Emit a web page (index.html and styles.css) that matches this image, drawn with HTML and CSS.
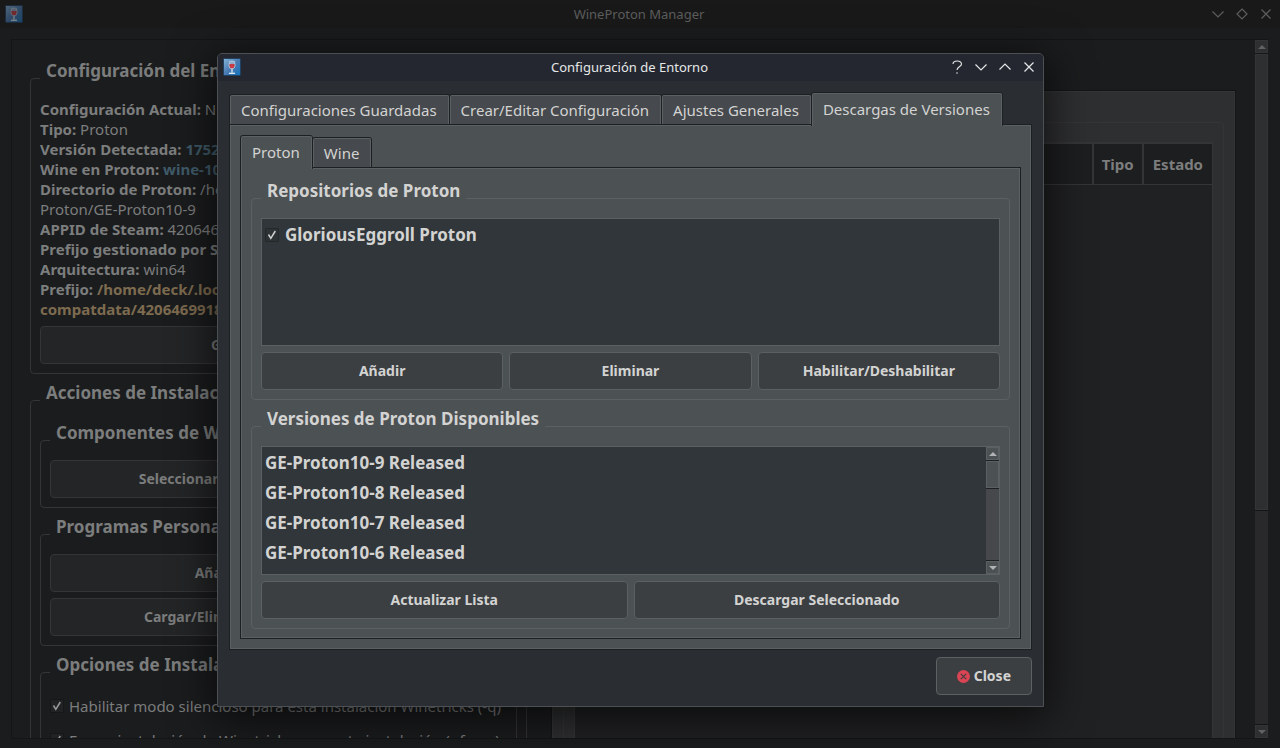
FILE: index.html
```html
<!DOCTYPE html>
<html lang="es">
<head>
<meta charset="utf-8">
<title>WineProton Manager</title>
<link rel="stylesheet" href="styles.css">
</head>
<body>
<svg class="defs" width="0" height="0" aria-hidden="true">
  <defs>
    <linearGradient id="sky" x1="0" y1="0" x2="1" y2="1">
      <stop offset="0" stop-color="#86b6da"/>
      <stop offset="0.5" stop-color="#4a7ab2"/>
      <stop offset="1" stop-color="#1173bd"/>
    </linearGradient>
    <symbol id="app" viewBox="0 0 18 18">
      <rect x="0.5" y="0.5" width="17" height="17" rx="1" fill="url(#sky)" stroke="#22405f"/>
      <path d="M6.5 3.500Q9 2.500 11.500 3.500L12 7.500a3 3.200 0 0 1-6 0z" fill="#8fa9c8" stroke="#c3d2e2" stroke-width="0.8"/>
      <path d="M6.500 6h5v2a2.500 2.400 0 0 1-5 0z" fill="#c93a44"/>
      <path d="M9 10.800v4" stroke="#d5e0ea" stroke-width="1.400" fill="none"/>
      <path d="M6 15.300h6" stroke="#eef3f7" stroke-width="1.200" fill="none"/>
    </symbol>
    <symbol id="help" viewBox="0 0 14 14"><path d="M3 4C3 .2 11.500-.2 11.500 4c0 2.800-4.500 2.800-4.500 6M7 12.200v1.500" fill="none" stroke="currentColor" stroke-width="1.100"/></symbol>
    <symbol id="down" viewBox="0 0 14 14"><path d="M1.500 4.500 7 10l5.500-5.500" fill="none" stroke="currentColor" stroke-width="1.200"/></symbol>
    <symbol id="up" viewBox="0 0 14 14"><path d="M1.500 9.500 7 4l5.500 5.500" fill="none" stroke="currentColor" stroke-width="1.200"/></symbol>
    <symbol id="diamond" viewBox="0 0 14 14"><path d="M7 2l5 5-5 5-5-5z" fill="none" stroke="currentColor" stroke-width="1.200"/></symbol>
    <symbol id="x" viewBox="0 0 14 14"><path d="M2.500 2.500l9 9M11.500 2.500l-9 9" fill="none" stroke="currentColor" stroke-width="1.200"/></symbol>
    <symbol id="tri-up" viewBox="0 0 8 4"><path d="M0 4l4-4 4 4z" fill="currentColor"/></symbol>
    <symbol id="tri-down" viewBox="0 0 8 4"><path d="M0 0l4 4 4-4z" fill="currentColor"/></symbol>
  </defs>
</svg>

<div class="window">
  <header class="titlebar">
    <svg class="app-icon"><use href="#app"/></svg>
    <h1 class="title">WineProton Manager</h1>
    <div class="controls">
      <button class="control" aria-label="Minimizar"><svg><use href="#down"/></svg></button>
      <button class="control" aria-label="Restaurar"><svg><use href="#diamond"/></svg></button>
      <button class="control" aria-label="Cerrar"><svg><use href="#x"/></svg></button>
    </div>
  </header>

  <main class="workspace">
    <div class="columns">
      <div class="sidebar">
        <fieldset class="group">
          <legend>Configuración del Entorno Actual</legend>
          <p class="info">
            <b>Configuración Actual:</b> Nuevo<br>
            <b>Tipo:</b> Proton<br>
            <b>Versión Detectada:</b> <b class="blue">1752</b><br>
            <b>Wine en Proton:</b> <b class="blue">wine-10.0</b><br>
            <b>Directorio de Proton:</b> /home/deck/<br>
            Proton/GE-Proton10-9<br>
            <b>APPID de Steam:</b> 4206469918<br>
            <b>Prefijo gestionado por Steam</b><br>
            <b>Arquitectura:</b> win64<br>
            <b>Prefijo:</b> <b class="gold">/home/deck/.local/</b><br>
            <b class="gold">compatdata/4206469918</b>
          </p>
          <button class="btn">Gestionar Entornos</button>
        </fieldset>

        <fieldset class="group">
          <legend>Acciones de Instalación</legend>
          <fieldset class="group">
            <legend>Componentes de Winetricks</legend>
            <button class="btn">Seleccionar Componentes de Winetricks</button>
          </fieldset>
          <fieldset class="group">
            <legend>Programas Personalizados</legend>
            <button class="btn">Añadir Programa Nuevo</button>
            <button class="btn">Cargar/Eliminar Programas Guardados</button>
          </fieldset>
          <fieldset class="group">
            <legend>Opciones de Instalación</legend>
            <label class="check"><input type="checkbox" checked>Habilitar modo silencioso para esta instalación Winetricks (-q)</label>
            <label class="check"><input type="checkbox" checked>Forzar instalación de Winetricks para esta instalación (--force)</label>
          </fieldset>
        </fieldset>
      </div>

      <div class="side-pane">
        <fieldset class="group table-group">
          <legend>Instalación</legend>
          <div class="table-frame">
            <table class="table">
              <thead><tr><th class="wide">Programa</th><th>Tipo</th><th>Estado</th></tr></thead>
            </table>
          </div>
        </fieldset>
      </div>
    </div>
    <div class="scrollbar">
      <button class="scroll-btn" aria-label="Subir"><svg><use href="#tri-up"/></svg></button>
      <div class="track"><div class="thumb"></div></div>
      <button class="scroll-btn" aria-label="Bajar"><svg><use href="#tri-down"/></svg></button>
    </div>
  </main>
</div>

<div class="overlay">
  <section class="dialog" role="dialog" aria-labelledby="dialog-title">
    <header class="titlebar">
      <svg class="app-icon"><use href="#app"/></svg>
      <h2 class="title" id="dialog-title">Configuración de Entorno</h2>
      <div class="controls">
        <button class="control" aria-label="Ayuda"><svg><use href="#help"/></svg></button>
        <button class="control" aria-label="Minimizar"><svg><use href="#down"/></svg></button>
        <button class="control" aria-label="Maximizar"><svg><use href="#up"/></svg></button>
        <button class="control" aria-label="Cerrar"><svg><use href="#x"/></svg></button>
      </div>
    </header>

    <div class="dialog-body">
      <div class="tabs-box">
        <div class="tabs" role="tablist">
          <button class="tab" role="tab">Configuraciones Guardadas</button>
          <button class="tab" role="tab">Crear/Editar Configuración</button>
          <button class="tab" role="tab">Ajustes Generales</button>
          <button class="tab selected" role="tab" aria-selected="true">Descargas de Versiones</button>
        </div>
        <div class="pane outer">
          <div class="tabs" role="tablist">
            <button class="tab selected" role="tab" aria-selected="true">Proton</button>
            <button class="tab" role="tab">Wine</button>
          </div>
          <div class="pane inner">
            <fieldset class="group">
              <legend>Repositorios de Proton</legend>
              <ul class="list">
                <li><label class="item"><input type="checkbox" checked>GloriousEggroll Proton</label></li>
              </ul>
              <div class="row">
                <button class="btn">Añadir</button>
                <button class="btn">Eliminar</button>
                <button class="btn">Habilitar/Deshabilitar</button>
              </div>
            </fieldset>
            <fieldset class="group">
              <legend>Versiones de Proton Disponibles</legend>
              <div class="list scrolling">
                <ul class="items">
                  <li class="item">GE-Proton10-9 Released</li>
                  <li class="item">GE-Proton10-8 Released</li>
                  <li class="item">GE-Proton10-7 Released</li>
                  <li class="item">GE-Proton10-6 Released</li>
                </ul>
                <div class="scrollbar">
                  <button class="scroll-btn" aria-label="Subir"><svg><use href="#tri-up"/></svg></button>
                  <div class="track"><div class="thumb"></div></div>
                  <button class="scroll-btn" aria-label="Bajar"><svg><use href="#tri-down"/></svg></button>
                </div>
              </div>
              <div class="row">
                <button class="btn">Actualizar Lista</button>
                <button class="btn">Descargar Seleccionado</button>
              </div>
            </fieldset>
          </div>
        </div>
      </div>
      <footer class="footer">
        <button class="btn close">
          <svg viewBox="0 0 12 12"><circle cx="6" cy="6" r="6" fill="#da4453"/><path d="M3.500 3.500l5 5M8.500 3.500l-5 5" stroke="#3b3f42" stroke-width="1"/></svg>
          Close
        </button>
      </footer>
    </div>
  </section>
</div>
</body>
</html>
```
FILE: styles.css
```css
* { box-sizing: border-box; }

body {
  --bg: #1b1c1d;
  --bar: #191919;
  --text: #7c7d7d;
  --title: #5c5d5d;
  --line: #343536;
  --btn: #242526;
  --dark: #141516;
  --pane: #2e2f30;
  --box: #1d1e1f;
  --track: #29292b;
  --arrow: #606162;
  margin: 0;
  height: 100vh;
  overflow: hidden;
  background: var(--bg);
  color: var(--text);
  font: 15px/20px "Noto Sans", sans-serif;
}

button { font: inherit; color: inherit; margin: 0; }
h1, h2, p, ul { margin: 0; padding: 0; }
.defs { position: absolute; }

/* Window frame */
.window {
  height: 100vh;
  display: flex;
  flex-direction: column;
}

.titlebar {
  flex: none;
  display: grid;
  grid-template-columns: 1fr auto 1fr;
  align-items: center;
  height: 28px;
  padding: 0 7px 0 5px;
  background: var(--bar);
  color: var(--title);
}
.title { font-size: 13px; font-weight: 400; }
.app-icon { width: 18px; height: 18px; }
.window .app-icon { opacity: 0.5; }
.controls { display: flex; justify-content: flex-end; gap: 10px; }
.control {
  display: block;
  width: 14px;
  height: 14px;
  padding: 0;
  border: 0;
  background: none;
}
.control svg { display: block; width: 14px; height: 14px; }

.workspace {
  flex: 1;
  min-height: 0;
  display: flex;
  margin: 11px 12px 9px 11px;
  border: solid var(--dark);
  border-width: 1px 0 1px 1px;
}
.columns {
  flex: 1;
  min-width: 0;
  overflow: hidden;
  display: grid;
  grid-template-columns: 497fr 683fr;
  gap: 25px;
  padding: 18px 20px 0 18px;
}
.sidebar { display: flex; flex-direction: column; gap: 6px; }

/* Titled groups */
.group {
  min-width: 0;
  margin: 0;
  padding: 0 9px 9px;
  border: 1px solid var(--line);
  border-radius: 4px;
}
.group > legend {
  padding: 0 6px 14px;
  font-size: 17px;
  line-height: 26px;
  font-weight: 700;
}
.group > * + .group, .inner > * + .group { margin-top: 6px; }
.group > legend + .group { margin-top: 0; }

.info { padding-top: 1px; margin-bottom: 7px; }
.blue { color: #405b6a; }
.gold { color: #7d6b50; }

.btn {
  display: flex;
  align-items: center;
  justify-content: center;
  width: 100%;
  height: 38px;
  padding: 0 20px;
  border: 1px solid var(--line);
  border-radius: 4px;
  background: var(--btn);
  font-size: 14px;
  font-weight: 700;
}
.btn + .btn { margin-top: 6px; }

.check { display: flex; align-items: center; gap: 5px; height: 28px; white-space: nowrap; }
.check + .check { margin-top: 6px; }
input[type="checkbox"] {
  appearance: none;
  flex: none;
  width: 14px;
  height: 14px;
  margin: 0;
  border: 1px solid var(--dark);
  border-radius: 1px;
  background: var(--btn) url("data:image/svg+xml,%3Csvg xmlns='http://www.w3.org/2000/svg' viewBox='0 0 12 12'%3E%3Cpath d='M2.500 5.500L4.800 9.300L9.300 2' fill='none' stroke='%23d0d0d0' stroke-width='1.500'/%3E%3C/svg%3E") center / 12px no-repeat;
}
.window input { opacity: 0.7; }

/* Package table */
.side-pane {
  margin-top: 33px;
  height: 100vh;
  padding: 10px;
  border: 1px solid var(--line);
  background: var(--pane);
  box-shadow: 0 0 0 1px var(--dark);
}
.table-group { height: 100%; padding: 0 10px 10px; }
.table-frame {
  height: 100vh;
  border: 1px solid var(--line);
  background: #202122;
}
.table { width: 100%; border-collapse: collapse; }
.table th {
  height: 41px;
  padding: 0 8px;
  border: solid var(--line);
  border-width: 1px 2px;
  background: var(--box);
  font-weight: 700;
}
.table .wide { width: 100%; }
.table th:first-child { border-left: 0; }
.table th:last-child { padding: 0 9px; border-right: 0; }

/* Scrollbars */
.scrollbar {
  flex: none;
  display: flex;
  flex-direction: column;
  width: 13px;
  background: var(--track);
}
.scroll-btn {
  display: flex;
  align-items: center;
  justify-content: center;
  height: 13px;
  padding: 0;
  border: 1px solid var(--line);
  background: var(--pane);
  color: var(--arrow);
}
.scroll-btn svg { width: 8px; height: 4px; }
.track { flex: 1; border: solid var(--dark); border-width: 1px 0; }
.thumb {
  height: 68%;
  border: 1px solid var(--line);
  background: var(--pane);
  box-shadow: 0 1px 0 var(--dark);
}

/* Dialog */
.overlay {
  position: absolute;
  inset: 0;
  padding: 53px 236px 0 217px;
}
.dialog {
  --bar: #242730;
  --text: #d3d3d2;
  --title: #e6e7e8;
  --line: #5b6063;
  --btn: #3b3f42;
  --dark: #1d2023;
  --pane: #4c5154;
  --box: #31363a;
  --track: #46484c;
  --arrow: #b0b2b3;
  border: 1px solid #4c4f53;
  border-radius: 5px 5px 0 0;
  background: #2a2d32;
  color: var(--text);
  box-shadow: 0 8px 44px 4px rgba(0, 0, 0, 0.65);
}
.dialog .titlebar { height: 27px; padding: 0 7px 1px 5px; border-radius: 4px 4px 0 0; }
.dialog-body { padding: 12px 11px 11px; }
.tabs-box { padding: 0 1px; }

.tabs { display: flex; align-items: flex-end; gap: 1px; }
.tab {
  height: 29px;
  margin-bottom: 1px;
  padding: 0 11px 1px 10px;
  border: 1px solid var(--line);
  border-bottom: 0;
  border-radius: 2px 2px 0 0;
  background: #46494d;
  box-shadow: 0 0 0 1px var(--dark);
  white-space: nowrap;
}
.tab.selected {
  position: relative;
  height: 33px;
  margin-bottom: -1px;
  padding-bottom: 3px;
  background: var(--pane);
  clip-path: inset(-1px -1px 0 -1px);
}
.pane {
  border: 1px solid var(--line);
  background: var(--pane);
  box-shadow: 0 0 0 1px var(--dark);
}
.outer { padding: 10px; }
.inner { padding: 9px 9px 8px; }

.list {
  height: 128px;
  border: 1px solid var(--line);
  background: var(--box);
  list-style: none;
}
.scrolling { display: flex; height: 129px; }
.items { flex: 1; list-style: none; overflow: hidden; }
.item {
  display: flex;
  align-items: center;
  gap: 6px;
  height: 30px;
  padding: 2px 3px 0;
  font-size: 17px;
  font-weight: 700;
}
.scrolling .thumb { height: 27px; }
.row { display: flex; gap: 6px; margin-top: 6px; }
.row .btn { flex: 1; margin: 0; }
.dialog input { --dark: #24282b; --btn: #2d3235; }

.footer { display: flex; justify-content: flex-end; margin-top: 8px; }
.close { width: auto; gap: 4px; }
.close svg { width: 13px; height: 13px; }
```
